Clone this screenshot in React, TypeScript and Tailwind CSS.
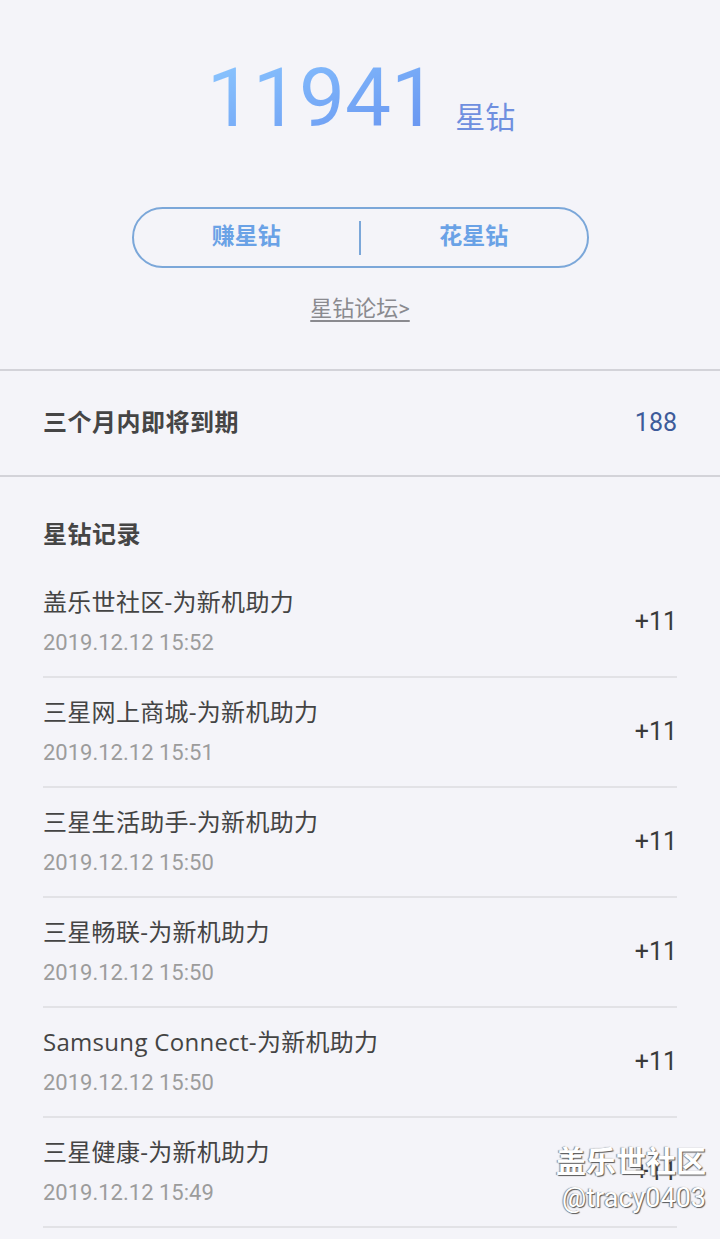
import React from 'react';

const records = [
  { title: '盖乐世社区-为新机助力', time: '2019.12.12 15:52', amount: '+11' },
  { title: '三星网上商城-为新机助力', time: '2019.12.12 15:51', amount: '+11' },
  { title: '三星生活助手-为新机助力', time: '2019.12.12 15:50', amount: '+11' },
  { title: '三星畅联-为新机助力', time: '2019.12.12 15:50', amount: '+11' },
  { title: 'Samsung Connect-为新机助力', time: '2019.12.12 15:50', amount: '+11' },
  { title: '三星健康-为新机助力', time: '2019.12.12 15:49', amount: '+11' },
];

const font = { fontFamily: 'Roboto, "Noto Sans CJK SC", sans-serif' };

export default function App() {
  return (
    <div className="relative h-[1239px] w-[720px] overflow-hidden bg-[#f4f4f9]" style={font}>
      {/* Balance */}
      <div className="flex h-[371px] flex-col items-center border-b-2 border-[#d3d3d9]">
        <div className="ml-[2px] mt-[54px] flex items-end">
          <span className="bg-gradient-to-br from-[#8cc8ff] to-[#6690ef] bg-clip-text text-[82px] leading-[88px] text-transparent">
            11941
          </span>
          <span className="mb-[4px] ml-[18px] text-[30px] leading-[40px] text-[#6f8fdf]">星钻</span>
        </div>
        <div className="mt-[65px] flex h-[61px] w-[457px] items-center rounded-full border-2 border-[#7ba7d9]">
          <button className="flex-1 text-[23px] font-bold text-[#6aa2e6]">赚星钻</button>
          <div className="h-[34px] w-[2px] bg-[#7ba7d9]" />
          <button className="flex-1 text-[23px] font-bold text-[#6aa2e6]">花星钻</button>
        </div>
        <a className="mt-[26px] text-[22px] leading-[30px] text-[#8a8a8f] underline underline-offset-4">星钻论坛&gt;</a>
      </div>

      {/* Expiring */}
      <div className="flex h-[106px] items-center justify-between border-b-2 border-[#d3d3d9] px-[43px]">
        <span className="text-[24px] font-bold tracking-[0.5px] text-[#454545]">三个月内即将到期</span>
        <span className="text-[25px] text-[#3d5b9a]">188</span>
      </div>

      {/* Records */}
      <div className="px-[43px]">
        <div className="flex h-[91px] items-end pb-[15px]">
          <span className="text-[24px] font-bold tracking-[0.5px] text-[#454545]">星钻记录</span>
        </div>
        {records.map((r) => (
          <div key={r.time + r.title} className="flex h-[110px] items-center justify-between border-b-2 border-[#e2e2e6]">
            <div className="flex flex-col pb-[2px]">
              <span className="font-['Open_Sans','Noto_Sans_CJK_SC',sans-serif] text-[24px] leading-[34px] tracking-[0.3px] text-[#444]">
                {r.title}
              </span>
              <span className="mt-[9px] text-[22px] leading-[30px] text-[#9c9c9c]">{r.time}</span>
            </div>
            <span className="text-[25px] text-[#3a3a3a]">{r.amount}</span>
          </div>
        ))}
      </div>

      {/* Watermark */}
      <div className="absolute right-[14px] top-[1143px] flex flex-col items-end text-white [text-shadow:1px_1px_1px_#555,-1px_0_1px_#888]">
        <span className="text-[30px] font-bold leading-[38px]">盖乐世社区</span>
        <span className="text-[27px] leading-[34px]">@tracy0403</span>
      </div>
    </div>
  );
}
